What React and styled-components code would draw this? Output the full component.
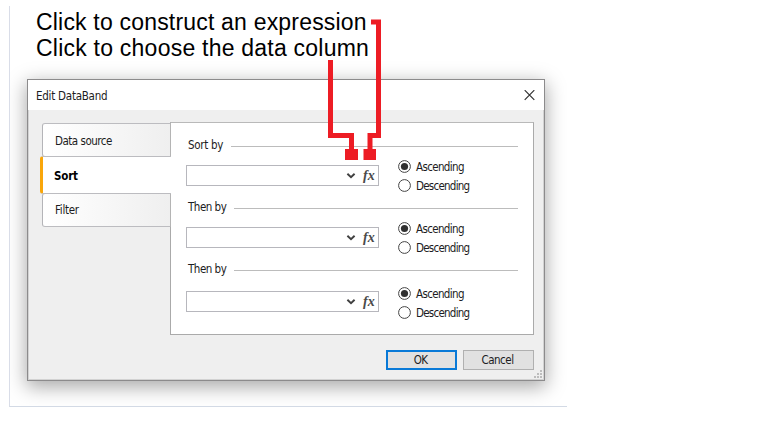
import React from "react";
import styled, { createGlobalStyle } from "styled-components";

const GlobalStyle = createGlobalStyle`
  *, *::before, *::after { box-sizing: border-box; }
  body { margin: 0; background: #fff; overflow: hidden; }
`;

const Page = styled.main`
  width: 781px;
  height: 429px;
  padding: 6px 0 0 9px;
  background: #fff;
  font-family: "DejaVu Sans Condensed", "DejaVu Sans", sans-serif;
  font-stretch: condensed;
  color: #1a1a1a;
`;

const Figure = styled.section`
  position: relative;
  width: 558px;
  height: 401px;
  border-left: 1px solid #d9dde8;
  border-bottom: 1px solid #d3dae5;
  overflow: hidden;
`;

const Caption = styled.div`
  height: 73px;
  padding: 4px 0 0 26px;
  font-family: "Liberation Sans", Arial, sans-serif;
  font-size: 23px;
  line-height: 25.5px;
  color: #000;
  white-space: nowrap;
`;

const CaptionLine = styled.div`
  width: max-content;
  letter-spacing: ${(p) => p.$spacing}px;
`;

const Leaders = styled.svg`
  position: absolute;
  left: -10px;
  top: -6px;
  pointer-events: none;
`;

const Dialog = styled.div`
  width: 518px;
  height: 302px;
  margin-left: 17px;
  border: 1px solid #8c8b8c;
  background: #efefef;
  box-shadow: inset 0 0 0 1px #d2d2d2, 0 5px 18px 1px rgba(0, 0, 0, 0.34);
`;

const TitleBar = styled.header`
  display: flex;
  align-items: center;
  justify-content: space-between;
  height: 30px;
  padding: 0 9px 0 8px;
  background: #fff;
`;

const Text = styled.span`
  display: inline-block;
  flex: none;
  font-size: ${(p) => (p.$bold ? 11.5 : 11.5)}px;
  line-height: 14px;
  padding-top: ${(p) => (p.$raised ? 0 : 1)}px;
  padding-bottom: ${(p) => (p.$raised ? 1 : 0)}px;
  letter-spacing: ${(p) => p.$spacing ?? 0}px;
  font-weight: ${(p) => (p.$bold ? 700 : 400)};
  color: ${(p) => (p.$bold ? "#000" : "#1c1c22")};
  white-space: nowrap;
`;

const Body = styled.div`
  display: flex;
  height: 225px;
  padding: 12px 10px 0 12px;
`;

const TabList = styled.nav`
  display: flex;
  flex-direction: column;
  align-items: flex-end;
  width: 131px;
  margin-right: -1px;
  padding-top: 1px;
  z-index: 1;
`;

const Tab = styled.div`
  display: flex;
  align-items: center;
  width: ${(p) => (p.$active ? 131 : 129)}px;
  height: ${(p) => (p.$active ? 38 : 34)}px;
  margin-bottom: -1px;
  padding-left: ${(p) => (p.$active ? 11 : 12)}px;
  border: 1px solid #bcbcc0;
  border-left: ${(p) => (p.$active ? "3px solid #f9a60a" : "1px solid #b4b4b8")};
  border-right: ${(p) => (p.$active ? "0" : "1px solid #b4b4b4")};
  border-radius: 3px 0 0 3px;
  background: ${(p) => (p.$active ? "#fff" : "linear-gradient(90deg, #fff, #efefef)")};
  z-index: ${(p) => (p.$active ? 1 : 0)};
`;

const Panel = styled.div`
  width: 364px;
  height: 213px;
  padding: 15px 15px 0 15px;
  border: 1px solid #aaa;
  border-top-color: #b9b9b9;
  background: #fff;
`;

const Group = styled.section`
  height: 62px;
`;

const Heading = styled.div`
  display: flex;
  align-items: center;
  gap: 8px;
  height: 14px;
  padding-left: 2px;
`;

const Rule = styled.div`
  flex: 1;
  height: 1px;
  margin-top: 2px;
  background: #bcbcbc;
`;

const Controls = styled.div`
  display: flex;
  align-items: flex-start;
  gap: 19px;
  padding-top: ${(p) => p.$offset}px;
`;

const Field = styled.div`
  display: flex;
  align-items: center;
  justify-content: flex-end;
  gap: 7px;
  width: 193px;
  height: 21px;
  margin-top: ${(p) => p.$drop}px;
  padding-right: 2px;
  border: 1px solid #b7b7bd;
  background: #fff;
`;

const FxLabel = styled.span`
  width: 13px;
  font: italic 700 14px/18px "Liberation Serif", serif;
  color: #4a4a4a;
`;

const Radios = styled.div`
  display: flex;
  flex-direction: column;
  gap: 5px;
`;

const RadioRow = styled.label`
  display: flex;
  align-items: center;
  gap: 5px;
  height: 14px;
`;

const Footer = styled.footer`
  display: flex;
  justify-content: flex-end;
  gap: 6px;
  padding: 15px 10px 0 0;
`;

const Button = styled.button`
  display: flex;
  align-items: center;
  justify-content: center;
  width: 71px;
  height: 20px;
  padding: 0 2px 0 0;
  border: ${(p) => (p.$primary ? "2px solid #0879d7" : "1px solid #b0b0b0")};
  background: #e1e1e1;
  font-family: inherit;
`;

const Grip = styled.svg`
  display: block;
  margin: 0 1px 0 auto;
`;

function CloseIcon() {
  return (
    <svg width="11" height="11" viewBox="0 0 11 11">
      <path d="M.7.2 10.3 9.8M10.3.2.7 9.8" stroke="#303030" strokeWidth="1.2" />
    </svg>
  );
}

function Chevron() {
  return (
    <svg width="10" height="7" viewBox="0 0 10 7">
      <path d="M1.4 1.7 5 5.2 8.6 1.7" fill="none" stroke="#404040" strokeWidth="1.9" />
    </svg>
  );
}

function RadioMark({ checked }) {
  return (
    <svg width="13" height="13" viewBox="0 0 13 13">
      <circle cx="6.5" cy="6.5" r="5.9" fill="#fff" stroke="#444" strokeWidth="1" />
      {checked && <circle cx="6.5" cy="6.5" r="3.6" fill="#303030" />}
    </svg>
  );
}

function SortGroup({ label, spacing, offset = 7, drop = 6 }) {
  return (
    <Group>
      <Heading>
        <Text $raised $spacing={spacing}>{label}</Text>
        <Rule />
      </Heading>
      <Controls $offset={offset}>
        <Field $drop={drop}>
          <Chevron />
          <FxLabel>fx</FxLabel>
        </Field>
        <Radios>
          <RadioRow>
            <RadioMark checked />
            <Text $spacing={-0.65}>Ascending</Text>
          </RadioRow>
          <RadioRow>
            <RadioMark />
            <Text $spacing={-0.75}>Descending</Text>
          </RadioRow>
        </Radios>
      </Controls>
    </Group>
  );
}

export default function App() {
  return (
    <>
      <GlobalStyle />
      <Page>
        <Figure>
          <Caption>
            <CaptionLine $spacing={0.19}>Click to construct an expression</CaptionLine>
            <CaptionLine $spacing={0.23}>Click to choose the data column</CaptionLine>
          </Caption>
          <Dialog>
            <TitleBar>
              <Text $spacing={-0.25}>Edit DataBand</Text>
              <CloseIcon />
            </TitleBar>
            <Body>
              <TabList>
                <Tab><Text $spacing={-0.5}>Data source</Text></Tab>
                <Tab $active><Text $bold $spacing={-0.2}>Sort</Text></Tab>
                <Tab><Text $raised $spacing={-0.3}>Filter</Text></Tab>
              </TabList>
              <Panel>
                <SortGroup label="Sort by" spacing={-0.3} />
                <SortGroup label="Then by" spacing={-0.5} />
                <SortGroup label="Then by" spacing={-0.5} offset={10} drop={5} />
              </Panel>
            </Body>
            <Footer>
              <Button $primary><Text $raised $spacing={-0.8}>OK</Text></Button>
              <Button><Text $raised $spacing={-0.5}>Cancel</Text></Button>
            </Footer>
            <Grip width="9" height="9" fill="#bdbdbd">
              <path d="M6 0h2v2h-2zM3 3h2v2h-2zM6 3h2v2h-2zM0 6h2v2h-2zM3 6h2v2h-2zM6 6h2v2h-2z" />
            </Grip>
          </Dialog>
          <Leaders width="568" height="170" fill="none" stroke="#ed1c24" strokeWidth="5">
            <path d="M330.5 60V135.5H351.5V150M371 22H378.500V135.500H370V150" />
            <path d="M345 149h13v11h-13zM363.500 149h12.500v11h-12.500z" fill="#ed1c24" stroke="none" />
          </Leaders>
        </Figure>
      </Page>
    </>
  );
}
